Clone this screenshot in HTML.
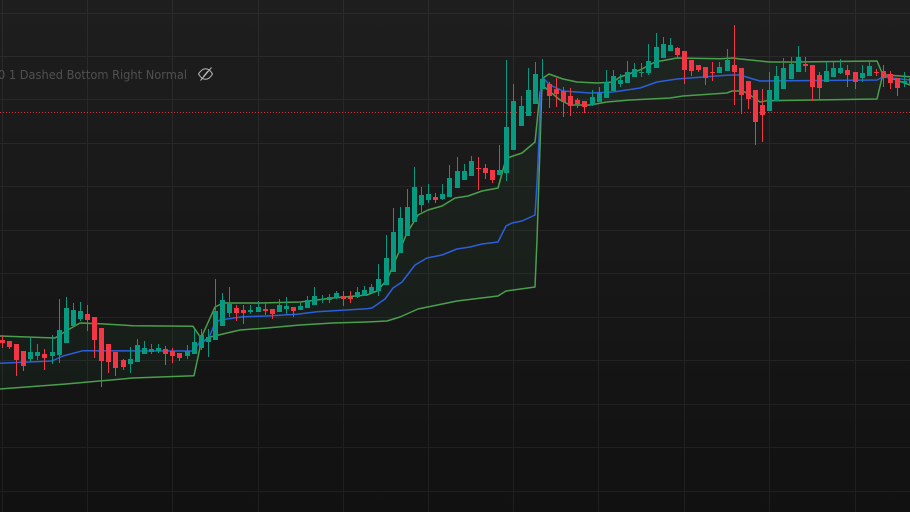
<!DOCTYPE html>
<html><head><meta charset="utf-8"><style>
html,body{margin:0;padding:0;background:#141414}
body{width:910px;height:512px;overflow:hidden}
svg{display:block}
text{font-family:"DejaVu Sans",sans-serif;font-size:12px}
</style></head><body>
<svg width="910" height="512" viewBox="0 0 910 512" xmlns="http://www.w3.org/2000/svg">
<defs><linearGradient id="bg" x1="0" y1="0" x2="0" y2="1"><stop offset="0" stop-color="#1e1e1e"/><stop offset="1" stop-color="#111111"/></linearGradient></defs>
<rect width="910" height="512" fill="url(#bg)"/>
<path shape-rendering="crispEdges" stroke="#ffffff" stroke-opacity=".06" fill="none" d="M2.5 0V512M87.5 0V512M172.5 0V512M258.5 0V512M343.5 0V512M428.5 0V512M513.5 0V512M598.5 0V512M684.5 0V512M769.5 0V512M855.5 0V512M0 13.5H910M0 56.5H910M0 99.5H910M0 143.5H910M0 186.5H910M0 230.5H910M0 273.5H910M0 317.5H910M0 360.5H910M0 404.5H910M0 447.5H910M0 491.5H910"/>
<text x="-2" y="79" fill="#505050" textLength="189" lengthAdjust="spacingAndGlyphs">0 1 Dashed Bottom Right Normal</text>
<g fill="none" stroke="#b8b8b8" stroke-width="1"><path d="M198.5 74C201 70 203.5 68.7 205.5 68.7C208 68.7 210.5 70.5 212.5 74C210.5 77.5 208 79.3 205.5 79.3C203 79.3 200.5 77.5 198.5 74Z"/><path d="M200.5 80.5L211.5 67.5"/><path d="M203.5 76.5L208 71.2" stroke-width="1.2"/></g>
<path d="M0 112.5H910" stroke="#f23645" stroke-dasharray="1 2" fill="none" shape-rendering="crispEdges" opacity=".9"/>
<g fill="#4caf50" fill-opacity=".06" stroke="none">
<path d="M0 336L55 338L66 331L80 323L100 323.7L133 325.7L193 326.3L201 338V343L194 375.7L133 378L66 384L0 389Z"/>
<path d="M201 338L215 307L223 303L260 303L300 302L333 298L367 295L377 291L387 280L407 233L418 215L428 210L442 206L455 198L468 196L482 191L498 188L506 159L510 157L522 153L535 142L541 90L537 240L535 287L506 291L498 296L457 301L418 309L400 317L387 321L367 322L333 323L300 325L267 328L240 330L210 337L201 343Z"/>
<path d="M543 78L549 74L563 79L577 82L597 83L613 82L620 77L640 70L655 62L677 58L720 58.7L733 58L740 59L770 62L793 62L877 61L883 75L882 78L877 99L767 100.7L760 102L753 97L743 91L732 91L727 93L683 96L670 98L630 100L607 102L590 105L570 105L560 100L542 85Z"/>
<path d="M883 75L887 75L910 76.7V85L887 76.7Z"/>
</g>
<g fill="none" stroke-width="1.5" stroke-linejoin="round">
<path stroke="#4a9f4c" d="M0 336L55 338L66 331L80 323L100 323.7L133 325.7L193 326.3L201 338L215 307L223 303L260 303L300 302L333 298L367 295L377 291L387 280L407 233L418 215L428 210L442 206L455 198L468 196L482 191L498 188L506 159L510 157L522 153L535 142L540 93L543 78L549 74L563 79L577 82L597 83L613 82L620 77L640 70L655 62L677 58L720 58.7L733 58L740 59L770 62L793 62L877 61L883 75L887 75L910 76.7"/>
<path stroke="#4a9f4c" d="M0 389L66 384L133 378L194 375.7L201 343L210 337L240 330L267 328L300 325L333 323L367 322L387 321L400 317L418 309L457 301L498 296L506 291L535 287L537 240L542 85L560 100L570 105L590 105L607 102L630 100L670 98L683 96L727 93L732 91L743 91L753 97L760 102L767 100.7L877 99L882 78L887 76.7L910 85"/>
<path stroke="#2b5fdc" d="M0 363.3L52 361L63 356L83 350.7L193 351L200 342L208 340L215 323L220 320L243 316.7L267 316L297 314.3L317 311.7L367 308.7L372 308L385 299L393 288L402 282L415 265L427 258L442 255L457 249L470 247L482 244L498 242L506 226L512 223L522 221L535 215L537 183L539 140L541 80L543 78L550 85L563 91L590 93L613 92L640 88L657 82L677 79L703 77L730 75L740 75L753 79L760 81L877 80L883 77L910 80"/>
</g>
<g fill="none" shape-rendering="crispEdges">
<path stroke="#089981" stroke-width="1" d="M30.5 337V362M37.5 344V360M52.5 335V364M59.5 299V363M66.5 297V343M73.5 303V327M80.5 302V321M130.5 347V373M137.5 339V362M144.5 341V354M151.5 344V354M158.5 344V353M187.5 345V359M194.5 329V354M201.5 329V350M208.5 329V357M215.5 279V340M222.5 293V326M229.5 287V317M250.5 305V314M258.5 301V312M279.5 299V312M286.5 297V314M300.5 303V310M307.5 296V308M314.5 287V305M322.5 295V303M329.5 294V303M336.5 291V299M357.5 287V298M364.5 286V296M371.5 284V294M378.5 264V296M386.5 235V285M393.5 208V272M400.5 207V253M407.5 189V236M414.5 167V222M421.5 187V212M428.5 184V203M442.5 184V200M449.5 165V197M457.5 157V188M464.5 164V180M471.5 156V176M499.5 145V175M506.5 60V181M513.5 84V150M521.5 96V126M528.5 68V116M535.5 62V104M542.5 59V89M592.5 90V106M599.5 87V102M606.5 70V98M613.5 70V91M620.5 74V87M627.5 61V83M634.5 63V77M641.5 63V77M648.5 44V75M656.5 33V68M663.5 37V58M670.5 38V51M719.5 62V73M727.5 49V71M769.5 72V111M776.5 66V101M783.5 58V89M791.5 57V79M798.5 46V72M826.5 62V82M833.5 62V77M840.5 59V74M862.5 65V82M869.5 62V76M904.5 72V87"/>
<path stroke="#089981" stroke-width="5" d="M30.5 352V359M37.5 352V356M52.5 352V356M59.5 330V355M66.5 308V343M73.5 310V326M80.5 311V319M130.5 359V364M137.5 345V362M144.5 348V354M151.5 349V352M158.5 348V351M187.5 351V356M194.5 342V354M201.5 335V348M208.5 337V342M215.5 311V340M222.5 300V326M229.5 304V313M250.5 310V312M258.5 307V312M279.5 305V312M286.5 306V309M300.5 306V310M307.5 300V308M314.5 296V305M322.5 299V300M329.5 297V300M336.5 293V298M357.5 292V297M364.5 290V296M371.5 287V293M378.5 279V291M386.5 258V285M393.5 232V272M400.5 218V253M407.5 207V236M414.5 187V222M421.5 195V205M428.5 194V200M442.5 194V199M449.5 178V197M457.5 171V188M464.5 171V180M471.5 161V176M499.5 170V175M506.5 127V173M513.5 101V150M521.5 106V126M528.5 90V116M535.5 74V104M542.5 79V89M592.5 97V105M599.5 93V102M606.5 82V98M613.5 76V91M620.5 80V84M627.5 72V83M634.5 69V77M641.5 72V73M648.5 61V73M656.5 47V68M663.5 44V58M670.5 45V51M719.5 67V73M727.5 60V71M769.5 90V111M776.5 76V101M783.5 68V89M791.5 64V79M798.5 57V72M826.5 71V82M833.5 68V77M840.5 68V73M862.5 73V78M869.5 66V76M904.5 81V83M911.5 78V84"/>
<path stroke="#f23645" stroke-width="1" d="M2.5 335V348M9.5 341V349M16.5 344V376M23.5 351V371M44.5 349V370M87.5 305V331M94.5 317V358M101.5 328V387M108.5 344V373M115.5 352V376M123.5 359V370M165.5 346V365M172.5 348V363M179.5 353V361M236.5 305V321M243.5 305V324M265.5 303V315M272.5 309V319M293.5 307V317M343.5 291V306M350.5 291V303M435.5 193V203M478.5 157V190M485.5 164V179M492.5 170V183M549.5 82V108M556.5 78V107M563.5 87V117M570.5 88V116M577.5 98V108M584.5 101V113M677.5 47V59M684.5 51V84M691.5 60V76M698.5 65V72M705.5 67V85M712.5 62V81M734.5 25V105M741.5 68V114M748.5 81V109M755.5 90V145M762.5 89V142M805.5 57V72M812.5 65V101M819.5 72V100M847.5 65V87M855.5 72V89M876.5 69V76M883.5 65V87M890.5 71V89M897.5 78V96"/>
<path stroke="#f23645" stroke-width="5" d="M2.5 340V343M9.5 341V347M16.5 344V360M23.5 351V366M44.5 354V358M87.5 314V320M94.5 317V340M101.5 328V361M108.5 344V362M115.5 352V368M123.5 360V367M165.5 349V354M172.5 351V356M179.5 353V358M236.5 308V313M243.5 310V313M265.5 309V311M272.5 309V314M293.5 307V311M343.5 296V299M350.5 297V299M435.5 197V200M478.5 168V169M485.5 168V173M492.5 170V180M549.5 84V96M556.5 89V94M563.5 91V102M570.5 96V106M577.5 100V104M584.5 101V107M677.5 48V55M684.5 51V70M691.5 60V71M698.5 65V70M705.5 67V78M712.5 72V73M734.5 65V72M741.5 68V95M748.5 81V99M755.5 90V122M762.5 105V115M805.5 64V66M812.5 65V87M819.5 75V88M847.5 70V75M855.5 72V82M876.5 72V73M883.5 71V78M890.5 74V83M897.5 78V88"/>
</g>
</svg>
</body></html>
